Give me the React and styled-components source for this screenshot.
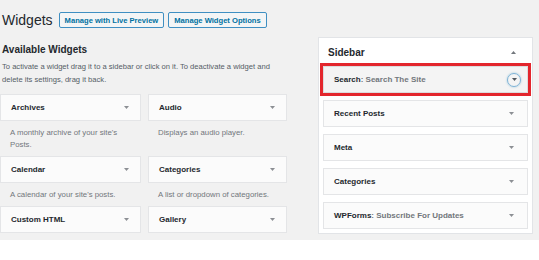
import styled, { createGlobalStyle } from "styled-components";

const GlobalStyle = createGlobalStyle`
  html, body {
    margin: 0;
    padding: 0;
    background: #fff;
    font-family: "Liberation Sans", Arial, sans-serif;
  }
`;

const Page = styled.div`
  height: 240px;
  box-sizing: border-box;
  padding-top: 12px;
  background: #f1f1f1;
  overflow: hidden;
`;

const Header = styled.div`
  display: flex;
  align-items: center;
  gap: 4px;
  margin-left: 2px;
`;

const Title = styled.h1`
  margin: 0 2px 0 0;
  font-size: 14px;
  font-weight: 400;
  line-height: 16px;
  color: #23282d;
`;

const HeaderButton = styled.a`
  display: inline-flex;
  align-items: center;
  height: 16px;
  box-sizing: border-box;
  padding: 0 5px;
  border: 1px solid #3f8fc2;
  border-radius: 2px;
  background: #f3f5f6;
  color: #0071a1;
  font-size: 7.6px;
  font-weight: 700;
  white-space: nowrap;
`;

const Body = styled.div`
  display: flex;
  gap: 31px;
  margin-top: 9px;
`;

const LeftColumn = styled.div`
  width: 287px;
  flex: none;
`;

const Heading = styled.h2`
  margin: 6px 0 0 2px;
  font-size: 10px;
  line-height: 14px;
  font-weight: 700;
  color: #23282d;
`;

const Intro = styled.p`
  margin: 2.5px -4px 8.5px 2px;
  font-size: 7.6px;
  line-height: 13px;
  color: #555d66;
`;

const WidgetGrid = styled.div`
  display: grid;
  grid-template-columns: 141px 139px;
  column-gap: 7px;
`;

const Card = styled.div`
  display: flex;
  align-items: center;
  justify-content: space-between;
  height: 27px;
  box-sizing: border-box;
  padding: 0 ${(p) => (p.$side ? "13px" : "11px")} 0 10px;
  border: 1px solid ${(p) => (p.$active ? "#dcdcde" : "#e4e5e7")};
  background: ${(p) => (p.$active ? "#f4f4f4" : "#fbfbfb")};
  outline: ${(p) => (p.$active ? "3px solid #e3262d" : "none")};
`;

const CardTitle = styled.span`
  font-size: 8px;
  font-weight: 700;
  color: #23282d;
  white-space: nowrap;
`;

const Extra = styled.span`
  color: #72777c;
`;

const Desc = styled.p`
  margin: 0;
  padding: 6px 10px 5px;
  font-size: 7.8px;
  line-height: 12px;
  color: #72777c;
`;

const Sidebar = styled.div`
  width: 215px;
  flex: none;
  box-sizing: border-box;
  padding: 0 4px 4px;
  border: 1px solid #e2e4e7;
  background: #fff;
  display: flex;
  flex-direction: column;
  gap: 7px;
`;

const SidebarHead = styled.div`
  display: flex;
  align-items: center;
  justify-content: space-between;
  height: 28px;
  margin-bottom: -7px;
  padding: 0 12px 0 5px;
  font-size: 10px;
  font-weight: 700;
  color: #23282d;
`;

const Circle = styled.span`
  display: inline-flex;
  align-items: center;
  justify-content: center;
  width: 14px;
  height: 14px;
  box-sizing: border-box;
  margin-right: -7px;
  border: 1px solid #7db2d6;
  border-radius: 50%;
  box-shadow: 0 0 2px rgba(30, 140, 190, 0.5);
`;

function Arrow({ up, color = "#8c8f94" }) {
  return (
    <svg width="5" height="3" viewBox="0 0 5 3">
      <polygon points={up ? "0,3 5,3 2.5,0" : "0,0 5,0 2.5,3"} fill={color} />
    </svg>
  );
}

const available = [
  { name: "Archives", desc: "A monthly archive of your site's Posts." },
  { name: "Audio", desc: "Displays an audio player." },
  { name: "Calendar", desc: "A calendar of your site's posts." },
  { name: "Categories", desc: "A list or dropdown of categories." },
  { name: "Custom HTML", desc: "" },
  { name: "Gallery", desc: "" },
];

const sidebarWidgets = [
  { name: "Search", extra: "Search The Site", active: true },
  { name: "Recent Posts" },
  { name: "Meta" },
  { name: "Categories" },
  { name: "WPForms", extra: "Subscribe For Updates" },
];

export default function App() {
  return (
    <Page>
      <GlobalStyle />
      <Header>
        <Title>Widgets</Title>
        <HeaderButton>Manage with Live Preview</HeaderButton>
        <HeaderButton>Manage Widget Options</HeaderButton>
      </Header>
      <Body>
        <LeftColumn>
          <Heading>Available Widgets</Heading>
          <Intro>
            To activate a widget drag it to a sidebar or click on it. To deactivate a widget
            and delete its settings, drag it back.
          </Intro>
          <WidgetGrid>
            {available.map((w) => (
              <div key={w.name}>
                <Card>
                  <CardTitle>{w.name}</CardTitle>
                  <Arrow />
                </Card>
                {w.desc && <Desc>{w.desc}</Desc>}
              </div>
            ))}
          </WidgetGrid>
        </LeftColumn>
        <Sidebar>
          <SidebarHead>
            Sidebar
            <Arrow up color="#72777c" />
          </SidebarHead>
          {sidebarWidgets.map((w) => (
            <Card key={w.name} $side $active={w.active}>
              <CardTitle>
                {w.name}
                {w.extra && <Extra>: {w.extra}</Extra>}
              </CardTitle>
              {w.active ? (
                <Circle>
                  <Arrow color="#50575e" />
                </Circle>
              ) : (
                <Arrow />
              )}
            </Card>
          ))}
        </Sidebar>
      </Body>
    </Page>
  );
}
